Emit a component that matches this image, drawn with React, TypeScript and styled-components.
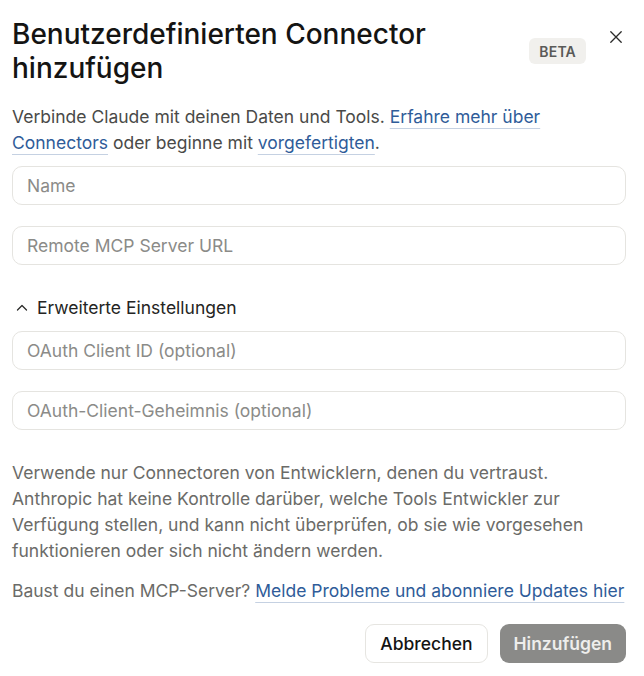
import styled, { createGlobalStyle } from "styled-components"

const GlobalStyle = createGlobalStyle`
    body {
        margin: 0;
        background: #ffffff;
        font-family: Inter, "Noto Sans", sans-serif;
        color: #1f1f1e;
    }
    * {
        box-sizing: border-box;
    }
`

const fields = ["Name", "Remote MCP Server URL"]
const advancedFields = ["OAuth Client ID (optional)", "OAuth-Client-Geheimnis (optional)"]

export default function App() {
    return (
        <>
            <GlobalStyle />
            <Dialog>
                <Header>
                    <Title>Benutzerdefinierten Connector hinzufügen</Title>
                    <Badge>BETA</Badge>
                    <CloseButton aria-label="Schließen">
                        <svg width="12" height="12" viewBox="0 0 12 12" fill="none">
                            <path d="M0.8 0.8L11.2 11.2M11.2 0.8L0.8 11.2" stroke="#2b2b2a" strokeWidth="1.3" strokeLinecap="round" />
                        </svg>
                    </CloseButton>
                </Header>

                <Intro>
                    Verbinde Claude mit deinen Daten und Tools. <Link>Erfahre mehr über</Link>
                    <br />
                    <Link>Connectors</Link> oder beginne mit <Link>vorgefertigten</Link>.
                </Intro>

                <Fields>
                    {fields.map((f) => (
                        <Input key={f} placeholder={f} />
                    ))}
                </Fields>

                <Toggle>
                    <svg width="12" height="12" viewBox="0 0 12 12" fill="none">
                        <path d="M1.5 8L6 3.5L10.5 8" stroke="#2b2b2a" strokeWidth="1.3" strokeLinecap="round" strokeLinejoin="round" />
                    </svg>
                    Erweiterte Einstellungen
                </Toggle>

                <Fields>
                    {advancedFields.map((f) => (
                        <Input key={f} placeholder={f} />
                    ))}
                </Fields>

                <Note $gap={30}>
                    Verwende nur Connectoren von Entwicklern, denen du vertraust.
                    <br />
                    Anthropic hat keine Kontrolle darüber, welche Tools Entwickler zur
                    <br />
                    Verfügung stellen, und kann nicht überprüfen, ob sie wie vorgesehen
                    <br />
                    funktionieren oder sich nicht ändern werden.
                </Note>

                <Note $gap={14}>
                    Baust du einen MCP-Server? <Link>Melde Probleme und abonniere Updates hier</Link>
                </Note>

                <Actions>
                    <SecondaryButton>Abbrechen</SecondaryButton>
                    <PrimaryButton disabled>Hinzufügen</PrimaryButton>
                </Actions>
            </Dialog>
        </>
    )
}

const Dialog = styled.div`
    width: 644px;
    padding: 17px 18px 0 12px;
    display: flex;
    flex-direction: column;
`
const Header = styled.div`
    display: flex;
    align-items: flex-start;
`
const Title = styled.h1`
    flex: 1;
    margin: 0;
    font-size: 28px;
    line-height: 34px;
    font-weight: 500;
    color: #141413;
    letter-spacing: 0;
    padding-right: 60px;
`
const Badge = styled.span`
    margin-top: 21px;
    padding: 0 10px;
    height: 26px;
    display: flex;
    align-items: center;
    background: #f1f0ed;
    border-radius: 6px;
    font-size: 14px;
    font-weight: 600;
    color: #5a5a58;
    letter-spacing: 0.2px;
`
const CloseButton = styled.button`
    margin-top: 10px;
    margin-left: 20px;
    width: 20px;
    height: 20px;
    border: 0;
    background: none;
    padding: 0;
    display: flex;
    align-items: center;
    justify-content: center;
`
const Intro = styled.p`
    margin: 19px 0 10px;
    font-size: 17.5px;
    line-height: 26px;
    color: #4a4a48;
`
const Link = styled.a`
    color: #2f5c99;
    text-decoration: underline;
    text-decoration-color: #c5d1e2;
    text-underline-offset: 5px;
    text-decoration-thickness: 1px;
`
const Fields = styled.div`
    display: flex;
    flex-direction: column;
    gap: 21px;
`
const Input = styled.input`
    width: 100%;
    height: 39px;
    padding: 0 14px;
    border: 1px solid #e5e4e0;
    border-radius: 10px;
    font-family: Inter, sans-serif;
    font-size: 17.5px;
    color: #1f1f1e;
    background: #fff;
    outline: none;
    &::placeholder {
        color: #8b8b88;
    }
`
const Toggle = styled.div`
    display: flex;
    align-items: center;
    gap: 9px;
    margin: 31px 0 11px 4px;
    font-size: 17.5px;
    line-height: 24px;
    color: #242423;
`
const Note = styled.p<{ $gap: number }>`
    margin: ${(p) => p.$gap}px 0 0;
    font-size: 17.5px;
    line-height: 26px;
    color: #6b6b68;
    white-space: nowrap;
`
const Actions = styled.div`
    display: flex;
    justify-content: flex-end;
    gap: 12px;
    margin-top: 20px;
`
const SecondaryButton = styled.button`
    height: 39px;
    padding: 0 14px;
    border: 1px solid #e6e5e1;
    border-radius: 9px;
    background: #fff;
    font-family: Inter, sans-serif;
    font-size: 17.5px;
    font-weight: 500;
    color: #141413;
`
const PrimaryButton = styled.button`
    height: 39px;
    padding: 0 14px;
    border: 0;
    border-radius: 9px;
    background: #8a8a88;
    font-family: Inter, sans-serif;
    font-size: 17.5px;
    font-weight: 600;
    color: #eeeeec;
`
